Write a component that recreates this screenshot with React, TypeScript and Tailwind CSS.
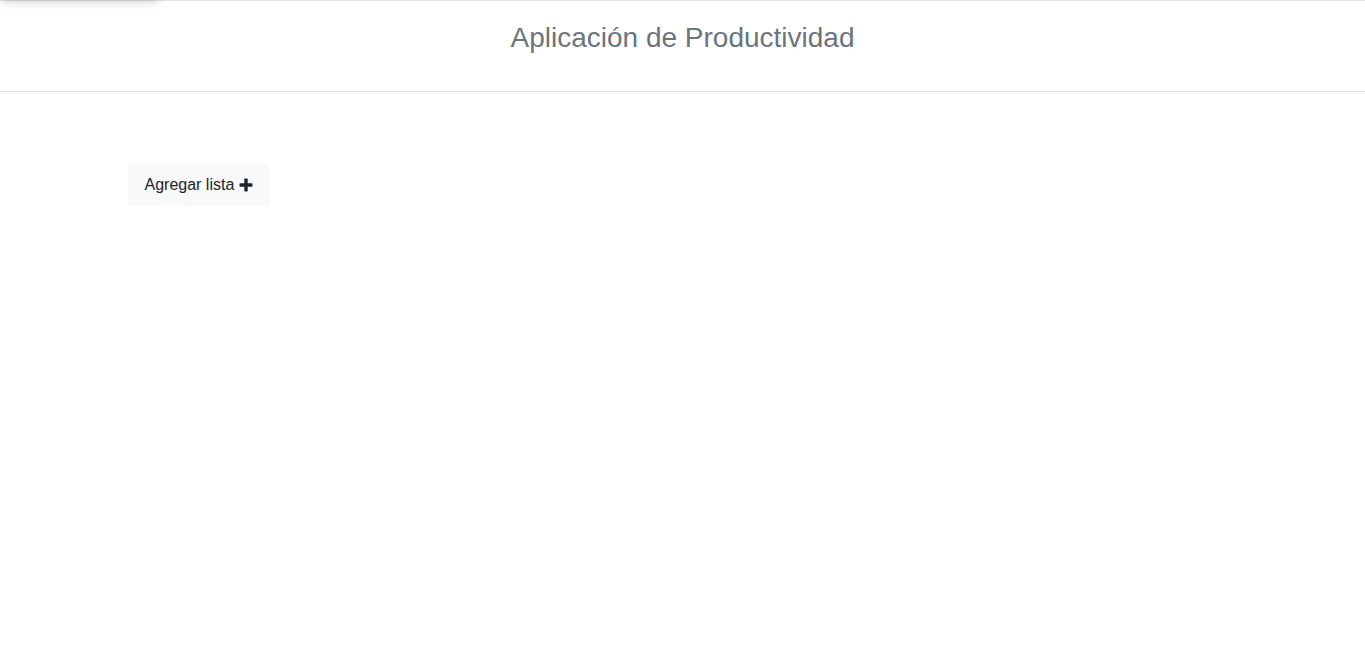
import React from "react";

function PlusIcon() {
  return (
    <svg width="14" height="14" viewBox="0 0 14 14" className="inline-block">
      <rect x="5.3" y="0.5" width="3.4" height="13" rx="0.8" fill="#212529" />
      <rect x="0.5" y="5.3" width="13" height="3.4" rx="0.8" fill="#212529" />
    </svg>
  );
}

export default function App() {
  return (
    <div
      className="relative min-h-[669px] overflow-hidden bg-white"
      style={{ fontFamily: '"Liberation Sans", Arial, sans-serif' }}
    >
      <div className="absolute -top-[40px] left-0 h-[40px] w-[160px] rounded-md bg-white shadow-[0_2px_10px_rgba(0,0,0,0.18)]" />

      <header className="h-[92px] border-y border-[#dee2e6] pt-5 text-center">
        <h3 className="text-[28px] leading-[1.2] font-normal text-[#6c757d]">
          Aplicación de Productividad
        </h3>
      </header>

      <main className="mx-auto w-[1140px] px-[15px] pt-[72px]">
        <button
          type="button"
          className="inline-flex items-center gap-[5px] rounded-[4px] border border-transparent bg-[#f8f9fa] py-2 pr-4 pl-4 text-[16px] leading-6 text-[#212529]"
        >
          Agregar lista
          <PlusIcon />
        </button>
      </main>
    </div>
  );
}
